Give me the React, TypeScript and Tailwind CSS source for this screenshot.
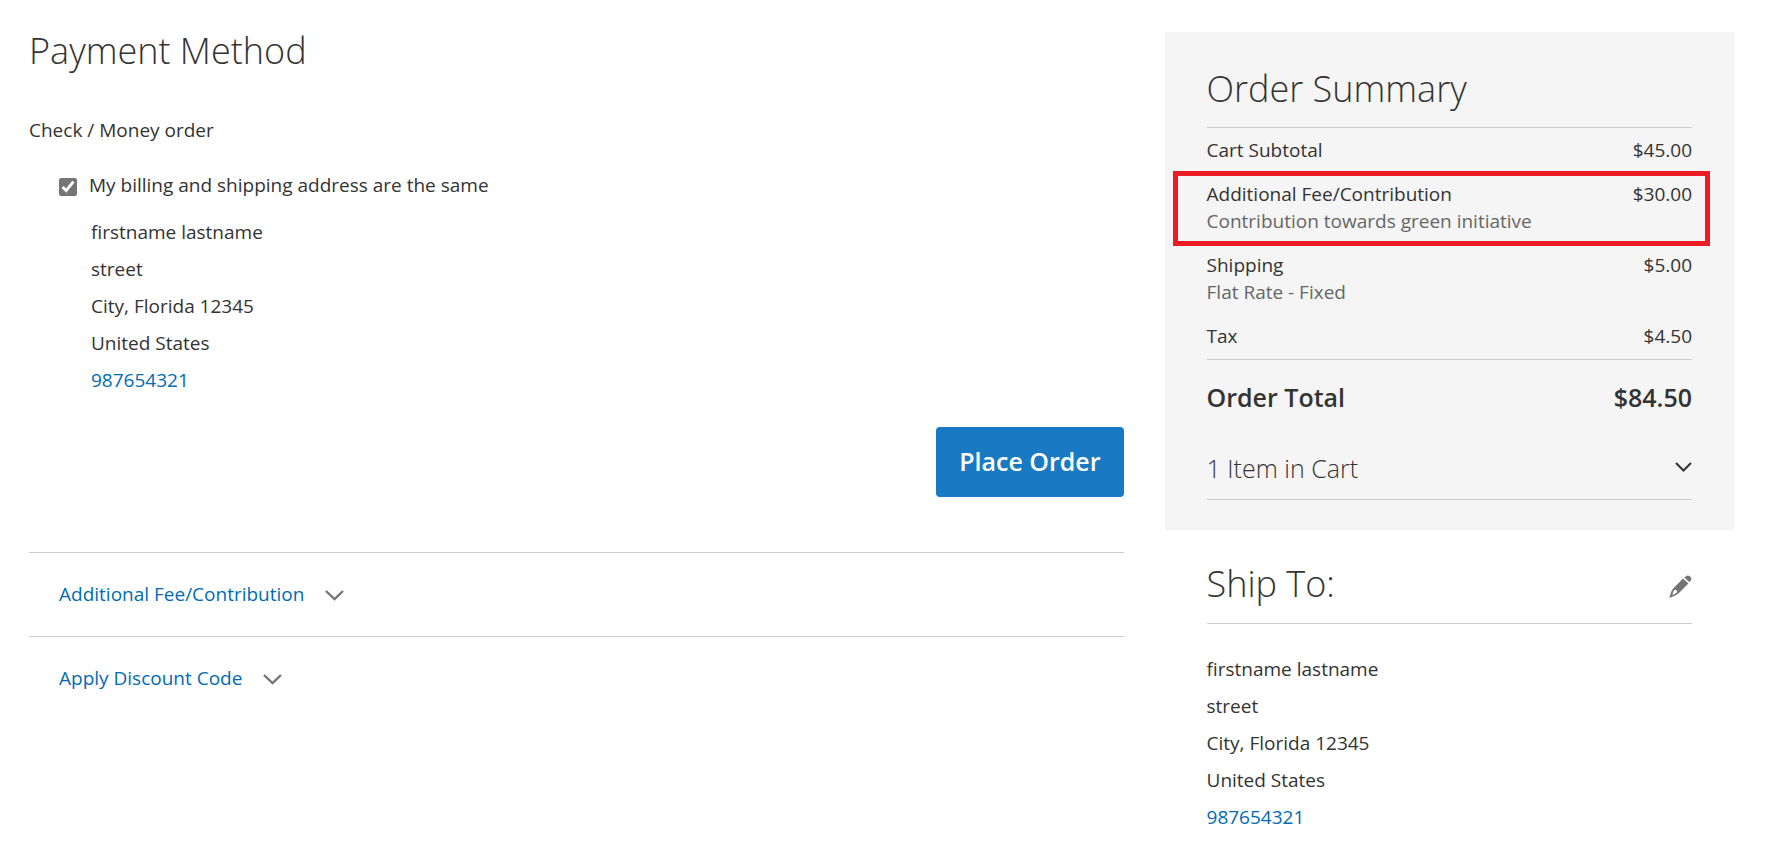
import type { ReactNode } from "react";

const address = ["firstname lastname", "street", "City, Florida 12345", "United States"];

function Address() {
  return (
    <address className="not-italic leading-[37px]">
      {address.map((line) => (
        <div key={line}>{line}</div>
      ))}
      <a href="tel:987654321" className="block text-[#006bb4]">
        987654321
      </a>
    </address>
  );
}

function WideChevron() {
  return (
    <svg className="mt-0.5" width="19" height="11" viewBox="0 0 19 11" fill="none" stroke="#757575" strokeWidth="2.4" aria-hidden="true">
      <path d="M1 1 L9.5 9 L18 1" />
    </svg>
  );
}

function Disclosure({ children }: { children: ReactNode }) {
  return (
    <div className="border-t border-[#cccccc] pt-[27px] pb-7 pl-[30px]">
      <button type="button" className="flex items-center gap-[21px] leading-7 text-[#006bb4]">
        {children}
        <WideChevron />
      </button>
    </div>
  );
}

type RowProps = { label: string; note?: string; amount: string; highlighted?: boolean };

function TotalRow({ label, note, amount, highlighted }: RowProps) {
  return (
    <tr className="relative align-top">
      <th scope="row" className="pt-2 pb-[9px] text-left font-normal">
        {label}
        {note && <span className="block text-[#666666]">{note}</span>}
        {highlighted && (
          <span className="pointer-events-none absolute -top-0.5 -right-[18px] -bottom-0.5 -left-[34px] border-[5px] border-[#ed1c24]" />
        )}
      </th>
      <td className="pt-2 pb-[9px] text-right">{amount}</td>
    </tr>
  );
}

export default function App() {
  return (
    <div className="flex items-start gap-[41px] bg-white pr-[39px] pl-[29px] font-['Open_Sans',sans-serif] text-[19px] text-[#333333]">
      <main className="min-w-0 flex-1 pt-[27px]">
        <h1 className="text-[36px] leading-[48px] font-light">Payment Method</h1>
        <h2 className="mt-[41px] leading-7">Check / Money order</h2>
        <div className="mt-[27px] pl-[30px]">
          <label className="flex items-center gap-3 leading-7">
            <input type="checkbox" defaultChecked className="mt-[3px] size-[18px] accent-[#757575]" />
            My billing and shipping address are the same
          </label>
          <div className="mt-[15px] pl-8">
            <Address />
          </div>
        </div>
        <div className="mt-7 flex justify-end">
          <button type="button" className="h-[70px] rounded bg-[#1979c3] px-[23px] text-[25px] font-semibold text-white">
            Place Order
          </button>
        </div>
        <div className="mt-[55px]">
          <Disclosure>Additional Fee/Contribution</Disclosure>
          <Disclosure>Apply Discount Code</Disclosure>
        </div>
      </main>

      <aside className="w-[33.4%] pt-8">
        <section className="bg-[#f5f5f5] px-[42px] pt-[33px] pb-[30px]">
          <h2 className="border-b border-[#cccccc] pb-[14px] text-[36px] leading-[48px] font-light">Order Summary</h2>
          <table className="mt-px w-full leading-[27px]">
            <tbody>
              <TotalRow label="Cart Subtotal" amount="$45.00" />
              <TotalRow
                label="Additional Fee/Contribution"
                note="Contribution towards green initiative"
                amount="$30.00"
                highlighted
              />
              <TotalRow label="Shipping" note="Flat Rate - Fixed" amount="$5.00" />
              <TotalRow label="Tax" amount="$4.50" />
            </tbody>
            <tfoot>
              <tr className="border-t border-[#cccccc] text-[25px] leading-8 font-semibold">
                <th scope="row" className="pt-[21px] text-left font-semibold">
                  Order Total
                </th>
                <td className="pt-[21px] text-right">$84.50</td>
              </tr>
            </tfoot>
          </table>
          <button
            type="button"
            className="mt-[39px] flex w-full items-center justify-between border-b border-[#cccccc] pb-[15px] text-[25px] leading-8 font-light"
          >
            1 Item in Cart
            <svg className="mb-0.5" width="17" height="10" viewBox="0 0 17 10" fill="none" stroke="#333333" strokeWidth="2" aria-hidden="true">
              <path d="M1 1 L8.5 8.5 L16 1" />
            </svg>
          </button>
        </section>
        <section className="px-[42px] pt-[30px]">
          <div className="flex items-center justify-between border-b border-[#cccccc] pb-[15px]">
            <h2 className="text-[36px] leading-[48px] font-light">Ship To:</h2>
            <button type="button" aria-label="Edit shipping address" className="pt-1">
              <svg width="23" height="23" viewBox="0 0 22 22" fill="#757575" aria-hidden="true">
                <path d="M14.8 2.6 L16.6 0.9 Q18 -0.2 19.6 1 L20.8 2.2 Q22 3.8 20.8 5.4 L19.4 6.8 Z" />
                <path
                  fillRule="evenodd"
                  d="M13.4 3.3 L18.6 8.1 L9 17.8 Q7.8 19 6 19.6 L0.2 22 L2.2 15.8 Q2.8 14 4 12.8 Z M4.8 14.6 L3.2 18.4 L4.2 19 L7.6 16.8 L7.6 15 L6.4 14 Z"
                />
              </svg>
            </button>
          </div>
          <div className="pt-[27px]">
            <Address />
          </div>
        </section>
      </aside>
    </div>
  );
}
